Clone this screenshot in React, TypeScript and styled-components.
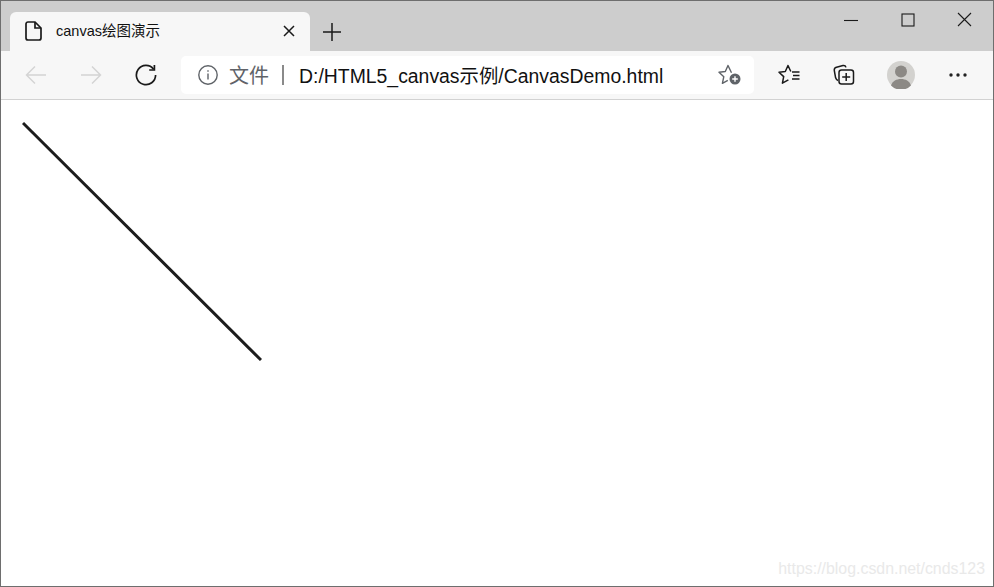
import React from 'react';
import styled, { createGlobalStyle } from 'styled-components';

const GlobalStyle = createGlobalStyle`
  html, body {
    margin: 0;
    padding: 0;
    background: white;
    overflow: hidden;
  }
`;

const Win = styled.div`
  box-sizing: border-box;
  display: flex;
  flex-direction: column;
  width: 994px;
  height: 587px;
  border: 1px solid #6e6e6e;
  font-family: "Segoe UI", "Open Sans", "Noto Sans CJK SC", sans-serif;
`;

const TabStrip = styled.div`
  display: flex;
  flex-shrink: 0;
  align-items: flex-end;
  height: 50px;
  padding-left: 9px;
  background: #cdcdcd;
`;

const Tab = styled.div`
  display: flex;
  align-items: center;
  width: 300px;
  height: 39px;
  padding: 0 15px 2px 15px;
  box-sizing: border-box;
  background: #f7f7f7;
  border-radius: 6px 6px 0 0;
`;

const TabTitle = styled.span`
  flex: 1;
  margin-left: 14px;
  padding-bottom: 2px;
  font-family: "Liberation Sans", "Noto Sans CJK SC", sans-serif;
  font-size: 14.5px;
  color: #111;
`;

const NewTab = styled.div`
  display: flex;
  align-items: center;
  justify-content: center;
  width: 44px;
  height: 39px;
`;

const Caption = styled.div`
  display: flex;
  align-self: flex-start;
  margin-left: auto;
`;

const CaptionButton = styled.div`
  display: flex;
  align-items: center;
  justify-content: center;
  width: 57px;
  height: 37px;
`;

const Toolbar = styled.div`
  display: flex;
  flex-shrink: 0;
  align-items: center;
  box-sizing: border-box;
  height: 49px;
  padding: 0 0 1px 7px;
  background: #f7f7f7;
  border-bottom: 1px solid #d2d2d2;
`;

const NavButton = styled.div<{ $w?: number }>`
  display: flex;
  flex-shrink: 0;
  align-items: center;
  justify-content: center;
  width: ${({ $w }) => $w || 55}px;
  height: 38px;
`;

const AddressBar = styled.div`
  display: flex;
  flex-shrink: 0;
  align-items: center;
  box-sizing: border-box;
  width: 573px;
  height: 38px;
  margin-left: 8px;
  margin-right: 7px;
  padding: 0 13px 0 17px;
  background: white;
  border-radius: 5px;
`;

const Scheme = styled.span`
  margin-left: 11px;
  font-size: 20px;
  color: #5f6368;
  font-family: "Noto Sans CJK SC", sans-serif;
`;

const Divider = styled.span`
  width: 2px;
  height: 20px;
  margin: 0 15px 0 13px;
  background: #8a8a8a;
`;

const Url = styled.span`
  flex: 1;
  padding-bottom: 1px;
  font-family: "Liberation Sans", "Noto Sans CJK SC", sans-serif;
  font-size: 19.4px;
  color: #111;
  white-space: nowrap;
`;

const Page = styled.main`
  position: relative;
  flex: 1;
  padding: 21px 0 0 21px;
  background: white;
`;

const LineCanvas = styled.svg`
  display: block;
`;

const Watermark = styled.span`
  position: absolute;
  right: 8px;
  bottom: 8px;
  font-family: "Liberation Sans", sans-serif;
  font-size: 15.9px;
  color: #e9e9e9;
`;

const stroke = { fill: 'none', stroke: '#1a1a1a', strokeWidth: 1.3 };

export default function App() {
  return (
    <>
      <GlobalStyle />
      <Win>
        <TabStrip>
          <Tab>
            <svg width="17" height="20" viewBox="0 0 17 20" {...stroke} strokeWidth={1.7}>
              <path d="M3 1h7l6 6v10a2 2 0 0 1-2 2H3a2 2 0 0 1-2-2V3a2 2 0 0 1 2-2z" />
              <path d="M10 1v6h6" />
            </svg>
            <TabTitle>canvas绘图演示</TabTitle>
            <svg width="12" height="12" viewBox="0 0 12 12" {...stroke} strokeWidth={1.5}>
              <path d="M1 1l10 10M11 1L1 11" />
            </svg>
          </Tab>
          <NewTab>
            <svg width="18" height="18" viewBox="0 0 18 18" {...stroke} strokeWidth={1.5}>
              <path d="M9 0v18M0 9h18" />
            </svg>
          </NewTab>
          <Caption>
            <CaptionButton>
              <svg width="14" height="14" viewBox="0 0 14 14" {...stroke} strokeWidth={1.1}>
                <path d="M0 7.500h14" />
              </svg>
            </CaptionButton>
            <CaptionButton>
              <svg width="14" height="14" viewBox="0 0 14 14" {...stroke} strokeWidth={1.1}>
                <rect x="1" y="1" width="12" height="12" />
              </svg>
            </CaptionButton>
            <CaptionButton>
              <svg width="15" height="15" viewBox="0 0 15 15" {...stroke} strokeWidth={1.1}>
                <path d="M1 1l13 13M14 1L1 14" />
              </svg>
            </CaptionButton>
          </Caption>
        </TabStrip>
        <Toolbar>
          <NavButton>
            <svg width="22" height="20" viewBox="0 0 22 20" fill="none" stroke="#d4d4d4" strokeWidth="1.5">
              <path d="M21 10H1.500M10 1.500L1.500 10l8.500 8.500" />
            </svg>
          </NavButton>
          <NavButton>
            <svg width="22" height="20" viewBox="0 0 22 20" fill="none" stroke="#d4d4d4" strokeWidth="1.5">
              <path d="M1 10h19.500M12 1.500l8.500 8.500-8.500 8.500" />
            </svg>
          </NavButton>
          <NavButton>
            <svg width="22" height="22" viewBox="0 0 22 22" {...stroke} strokeWidth={1.7}>
              <path d="M18.600 5.200A9.600 9.600 0 1 0 20.600 11" />
              <path d="M19.400 1v5h-5.200" />
            </svg>
          </NavButton>
          <AddressBar>
            <svg width="20" height="20" viewBox="0 0 20 20" fill="none" stroke="#5f6368" strokeWidth="1.4">
              <circle cx="10" cy="10" r="9.200" />
              <path d="M10 8.500v6M10 5.200v1.500" />
            </svg>
            <Scheme>文件</Scheme>
            <Divider />
            <Url>D:/HTML5_canvas示例/CanvasDemo.html</Url>
            <svg width="23" height="21" viewBox="0 0 23 21" fill="none" stroke="#5f6368" strokeWidth="1.4">
              <path d="M13.500 8.800L10 1.500 7.300 7.500 1 8.300l4.800 4.400-1.400 6.600 5.400-3" strokeLinejoin="round" />
              <circle cx="17" cy="15" r="5.500" fill="#5f6368" stroke="none" />
              <path d="M17 12.200v5.600M14.200 15h5.600" stroke="white" />
            </svg>
          </AddressBar>
          <NavButton>
            <svg width="22" height="21" viewBox="0 0 22 21" {...stroke} strokeWidth={1.5}>
              <path d="M12.800 7.500L10 1.500 7.300 7.500 1 8.200l4.700 4.400-1.300 6.600 6-3.300" strokeLinejoin="round" />
              <path d="M14 8h7.500M15 11.500h6.500M14 15h7.500" />
            </svg>
          </NavButton>
          <NavButton>
            <svg width="22" height="21" viewBox="0 0 22 21" {...stroke} strokeWidth={1.5}>
              <path d="M5 16.500C3.500 16 3 15 2.600 13.800L1.300 6.500C1 4.600 2 3.600 3.500 3.200L10 1.600c1.600-.3 2.600.5 3 1.800" />
              <rect x="6" y="6" width="14.500" height="14" rx="2.500" />
              <path d="M13.200 9v8M9.200 13h8" />
            </svg>
          </NavButton>
          <NavButton $w={59}>
            <svg width="28" height="28" viewBox="0 0 28 28">
              <circle cx="14" cy="14" r="14" fill="#d3d2cf" />
              <circle cx="14" cy="10.500" r="6" fill="#8c8985" />
              <path d="M4 24.500c1.500-4.500 5.500-6.500 10-6.500s8.500 2 10 6.500a14 14 0 0 1-20 0z" fill="#8c8985" />
            </svg>
          </NavButton>
          <NavButton $w={56}>
            <svg width="18" height="4" viewBox="0 0 18 4" fill="#222">
              <circle cx="2" cy="2" r="1.700" />
              <circle cx="9" cy="2" r="1.700" />
              <circle cx="16" cy="2" r="1.700" />
            </svg>
          </NavButton>
        </Toolbar>
        <Page>
          <LineCanvas width="240" height="240" viewBox="0 0 240 240">
            <path d="M1 2L239 239" stroke="#1c1c1c" strokeWidth="3" fill="none" />
          </LineCanvas>
          <Watermark>https://blog.csdn.net/cnds123</Watermark>
        </Page>
      </Win>
    </>
  );
}
